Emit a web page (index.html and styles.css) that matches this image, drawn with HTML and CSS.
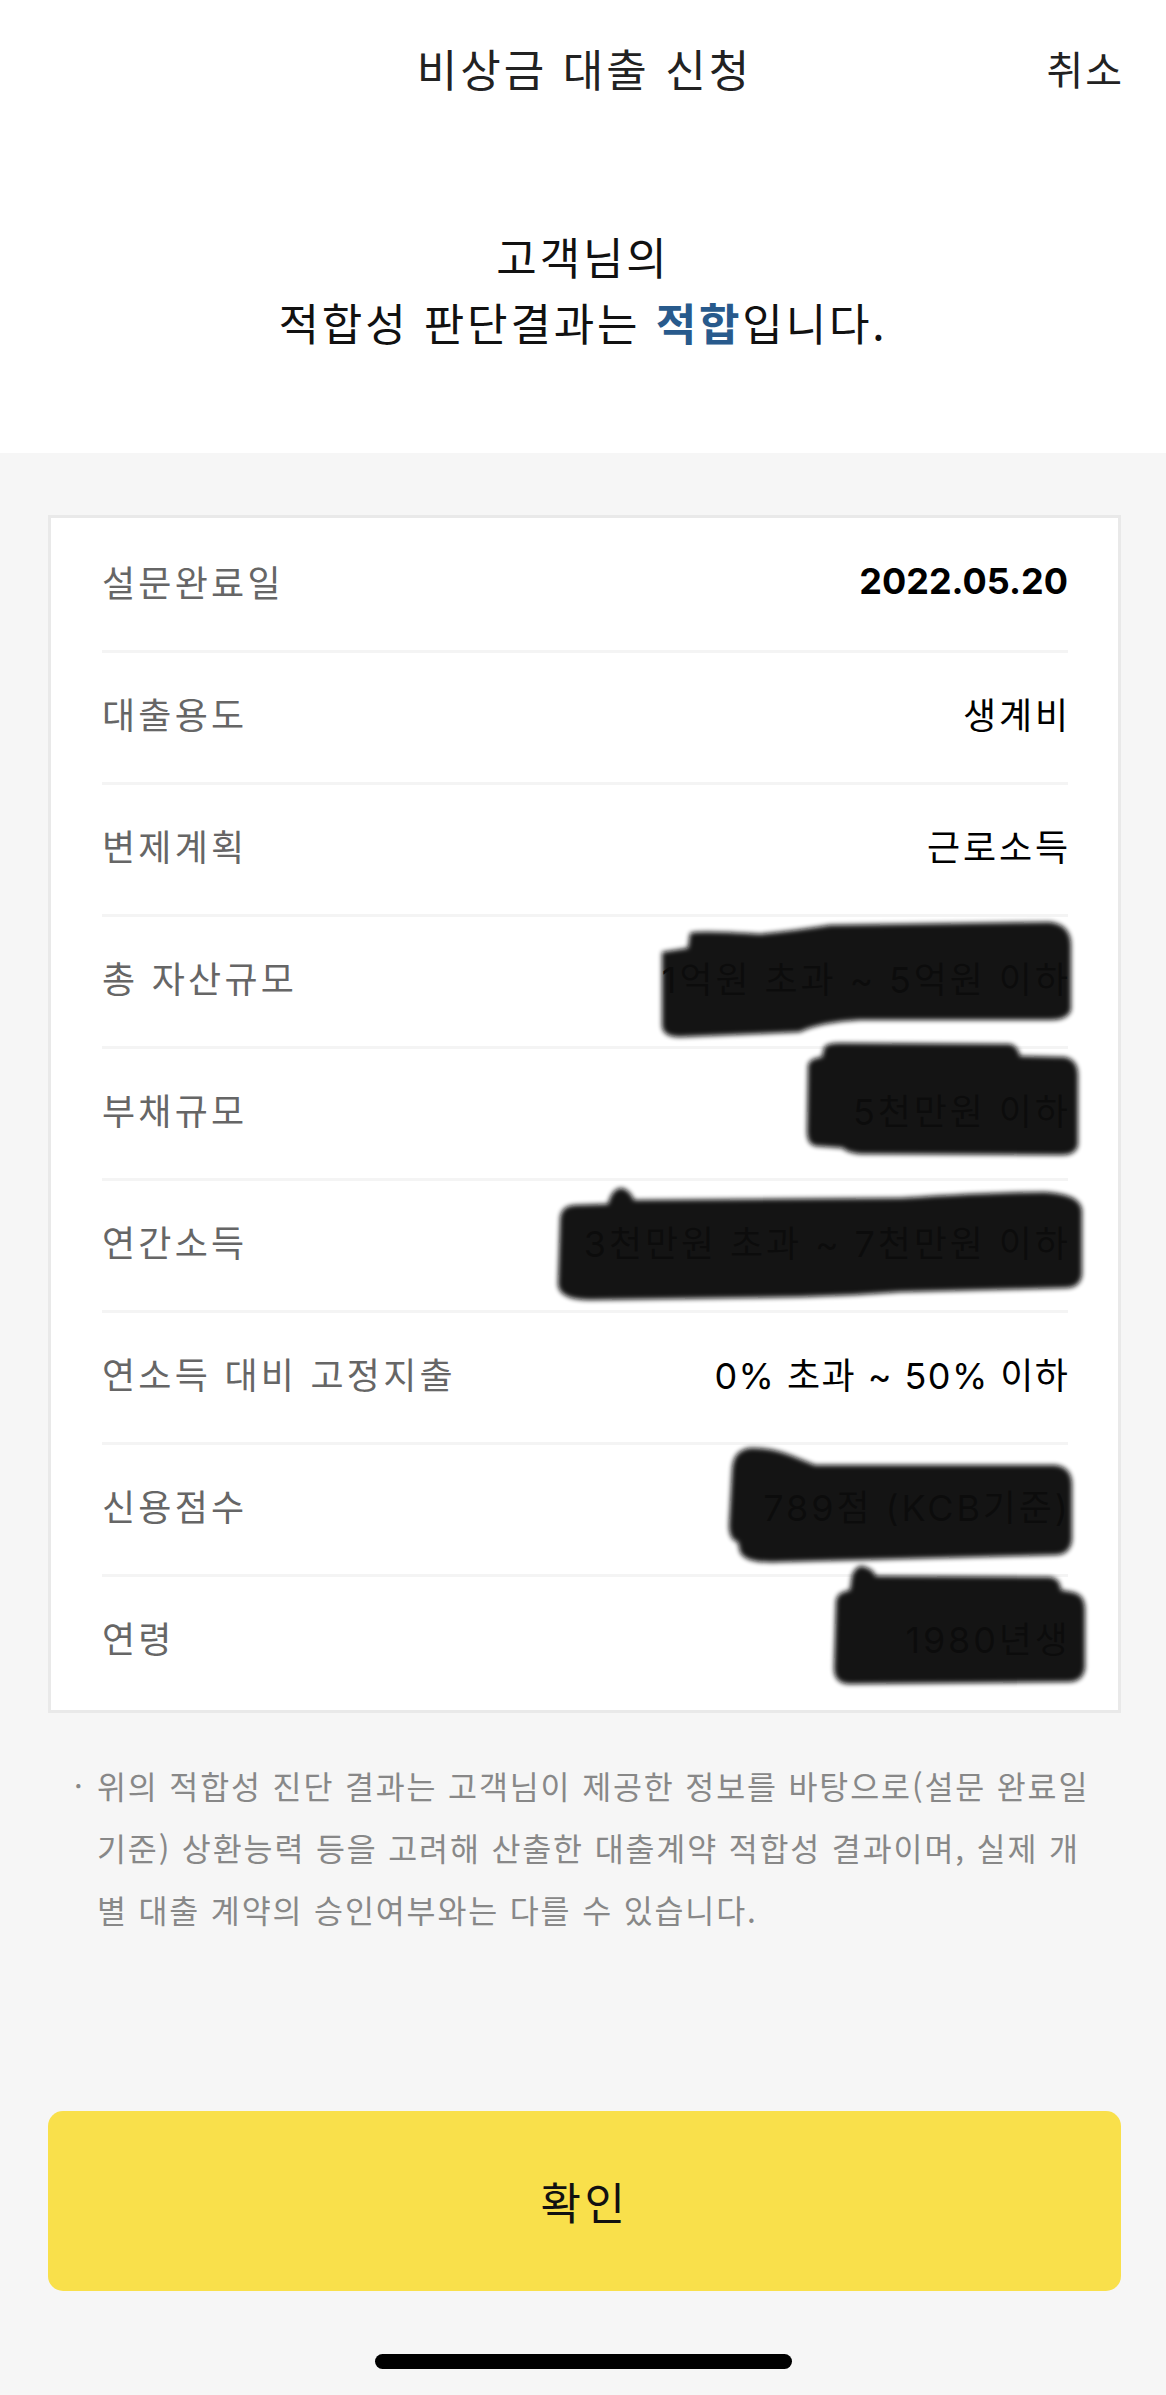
FILE: index.html
```html
<!DOCTYPE html>
<html lang="ko">
<head>
	<meta charset="utf-8">
	<title>비상금 대출 신청</title>
	<link rel="stylesheet" href="styles.css">
</head>
<body>
	<header class="top">
		<div class="nav">
			<span></span>
			<h1 class="nav__title">비상금 대출 신청</h1>
			<a href="javascript://" class="nav__cancel">취소</a>
		</div>
		<p class="result">
			고객님의<br>
			적합성 판단결과는 <strong class="result__ok">적합</strong>입니다.
		</p>
	</header>

	<main class="sheet">
		<div class="card">
			<div class="row">
				<span class="row__label">설문완료일</span>
				<span class="row__value row__value--bold">2022.05.20</span>
			</div>
			<div class="row">
				<span class="row__label">대출용도</span>
				<span class="row__value">생계비</span>
			</div>
			<div class="row">
				<span class="row__label">변제계획</span>
				<span class="row__value">근로소득</span>
			</div>
			<div class="row">
				<span class="row__label">총 자산규모</span>
				<span class="row__value">1억원 초과 ~ 5억원 이하</span>
			</div>
			<div class="row">
				<span class="row__label">부채규모</span>
				<span class="row__value">5천만원 이하</span>
			</div>
			<div class="row">
				<span class="row__label">연간소득</span>
				<span class="row__value">3천만원 초과 ~ 7천만원 이하</span>
			</div>
			<div class="row">
				<span class="row__label">연소득 대비 고정지출</span>
				<span class="row__value row__value--mixed">0% 초과 ~ 50% 이하</span>
			</div>
			<div class="row">
				<span class="row__label">신용점수</span>
				<span class="row__value">789점 (KCB기준)</span>
			</div>
			<div class="row">
				<span class="row__label">연령</span>
				<span class="row__value">1980년생</span>
			</div>

			<!-- marker strokes over the private values -->
			<svg class="card__mask" viewBox="48 515 1073 1197">
				<defs>
					<filter id="soft" x="-5%" y="-20%" width="110%" height="140%">
						<feGaussianBlur stdDeviation="2.5"/>
					</filter>
				</defs>
				<g filter="url(#soft)">
					<path d="M662,952 L688,948 L690,933 Q700,930 760,934 Q800,930 830,925 L1050,922 Q1071,925 1071,945 L1071,1010 Q1068,1020 1050,1020 L860,1020 Q820,1022 800,1032 L680,1037 Q662,1037 662,1025 Z"/>
					<path d="M808,1065 Q810,1058 822,1057 L824,1048 Q826,1043 840,1043 L1010,1044 Q1018,1046 1020,1056 L1065,1057 Q1078,1060 1078,1075 L1078,1145 Q1076,1155 1062,1155 L860,1154 Q845,1152 843,1148 L815,1146 Q807,1144 807,1132 Z"/>
					<path d="M560,1220 Q560,1206 575,1205 L608,1204 Q612,1188 622,1188 Q630,1190 634,1200 L900,1198 Q990,1192 1045,1192 Q1080,1194 1082,1210 L1082,1275 Q1080,1288 1065,1288 L900,1292 Q850,1296 800,1297 L590,1300 Q560,1300 558,1285 Z"/>
					<path d="M732,1470 Q733,1450 750,1448 Q770,1447 790,1455 L815,1465 L1055,1465 Q1072,1467 1072,1485 L1072,1540 Q1070,1555 1055,1555 L780,1562 Q745,1564 740,1552 L738,1542 Q729,1540 729,1525 Z"/>
					<path d="M836,1600 Q838,1592 850,1590 L852,1575 Q856,1566 862,1566 Q872,1568 876,1576 L1050,1577 Q1060,1578 1061,1590 L1072,1592 Q1085,1594 1085,1610 L1085,1668 Q1083,1682 1068,1682 L850,1684 Q834,1684 834,1668 Z"/>
				</g>
			</svg>
		</div>

		<div class="notice">
			<span class="notice__dot">·</span>
			<p class="notice__text">위의 적합성 진단 결과는 고객님이 제공한 정보를 바탕으로(설문 완료일 기준) 상환능력 등을 고려해 산출한 대출계약 적합성 결과이며, 실제 개별 대출 계약의 승인여부와는 다를 수 있습니다.</p>
		</div>

		<button class="confirm">확인</button>

		<div class="home-bar"></div>
	</main>
</body>
</html>
```

FILE: styles.css
```css
body {
	font-family: "Noto Sans CJK KR", "Noto Sans", sans-serif;
	color: #111;
	background-color: #f6f6f6;
	margin: 0;
}

a {
	color: inherit;
	text-decoration: none;
}

.top {
	background-color: #fff;
	padding-bottom: 98px;
}

.nav {
	display: grid;
	grid-template-columns: 1fr auto 1fr;
	align-items: center;
	height: 136px;
	padding-right: 44px;
	padding-left: 44px;
}

.nav__title {
	margin: 0 -.07em 0 0;
	font-size: 44px;
	font-weight: normal;
	letter-spacing: .07em;
	color: #222;
}

.nav__cancel {
	justify-self: end;
	margin-right: -.05em;
	font-size: 40px;
	letter-spacing: .05em;
	color: #222;
}

.result {
	margin: 87px 0 0;
	text-align: center;
	font-size: 44px;
	line-height: 66px;
	letter-spacing: .065em;
	color: #111;
}

.result__ok {
	color: #285a8c;
}

.sheet {
	padding-top: 62px;
	padding-bottom: 23px;
}

.card {
	position: relative;
	margin: 0 45px 0 48px;
	padding: 0 50px 4px 51px;
	background-color: #fff;
	border: 3px solid #e9e9e9;
}

.row {
	display: flex;
	justify-content: space-between;
	align-items: center;
	box-sizing: border-box;
	height: 132px;
	padding-bottom: 7px;
	font-size: 36px;
}

.row + .row {
	border-top: 3px solid #f4f4f4;
	padding-bottom: 10px;
}

.row__label {
	letter-spacing: .09em;
	color: #666;
}

.row__value {
	margin-right: -.08em;
	font-family: Inter, "Noto Sans CJK KR", sans-serif;
	letter-spacing: .08em;
	color: #000;
}

.row__value--bold {
	margin-right: 0;
	font-weight: bold;
	letter-spacing: 0;
}

.row__value--mixed {
	margin-right: -.04em;
	letter-spacing: .04em;
}

.card__mask {
	position: absolute;
	top: -3px;
	left: -3px;
	width: 1073px;
	height: 1197px;
	pointer-events: none;
	fill: #0a0a0a;
	opacity: .97;
}

.notice {
	display: flex;
	margin-top: 41px;
	padding: 0 76px 0 74px;
	color: #888;
}

.notice__dot {
	flex: 0 0 23px;
	font-size: 31px;
	line-height: 62px;
}

.notice__text {
	margin: 0;
	font-size: 31.5px;
	line-height: 62px;
	letter-spacing: .059em;
	word-break: break-all;
}

.confirm {
	display: block;
	box-sizing: border-box;
	width: calc(100% - 93px);
	height: 180px;
	margin: 171px 45px 0 48px;
	background-color: #f9e04b;
	border: none;
	border-radius: 15px;
	font-family: inherit;
	font-size: 44px;
	letter-spacing: .08em;
	color: #111;
	cursor: pointer;
}

.home-bar {
	width: 417px;
	height: 15px;
	margin: 63px auto 0;
	background-color: #000;
	border-radius: 8px;
}
```
